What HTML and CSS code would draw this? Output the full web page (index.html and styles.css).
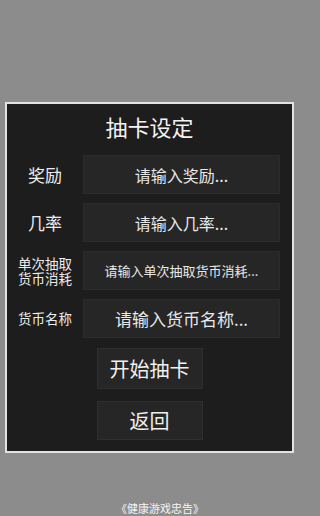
FILE: index.html
```html
<!DOCTYPE html>
<html lang="zh-CN">
<head>
<meta charset="utf-8">
<link rel="stylesheet" href="styles.css">
</head>
<body>
<div class="panel">
  <div class="title">抽卡设定</div>
  <div class="form">
    <div class="label">奖励</div>
    <input class="field" placeholder="请输入奖励...">
    <div class="label">几率</div>
    <input class="field" placeholder="请输入几率...">
    <div class="label small"><span>单次抽取</span><span>货币消耗</span></div>
    <input class="field field-sm" placeholder="请输入单次抽取货币消耗...">
    <div class="label small">货币名称</div>
    <input class="field field-md" placeholder="请输入货币名称...">
  </div>
  <div class="actions">
    <button class="btn btn-start">开始抽卡</button>
    <button class="btn btn-back">返回</button>
  </div>
</div>
<div class="footer">《健康游戏忠告》</div>
</body>
</html>
```
FILE: styles.css
```css
* { box-sizing: border-box; }
html, body {
  margin: 0;
  padding: 0;
  background: #8c8c8c;
  font-family: "Noto Sans CJK SC", "Noto Sans", sans-serif;
  color: #ececec;
}
body { height: 516px; overflow: hidden; }
.panel {
  margin: 102px 0 0 5px;
  width: 289px;
  height: 351px;
  border: 2px solid #e2e2e2;
  background: #1d1d1d;
  padding: 0 12px 0 0;
}
.title {
  height: 44px;
  line-height: 44px;
  margin-bottom: 7px;
  text-align: center;
  font-size: 22px;
  padding-left: 12px;
  color: #f2f2f2;
}
.form {
  display: grid;
  grid-template-columns: 76px 197px;
  grid-auto-rows: 39px;
  row-gap: 9px;
}
.label {
  display: flex;
  flex-direction: column;
  align-items: center;
  justify-content: center;
  font-size: 17px;
  line-height: 1.15;
  text-align: center;
  color: #ececec;
}
.label.small { font-size: 13.5px; line-height: 15px; }
.label.small span { display: block; }
.field {
  height: 39px;
  width: 197px;
  margin: 0;
  padding: 0;
  border: 1px solid #2b2b2b;
  background: #262626;
  text-align: center;
  font-family: inherit;
  font-size: 16px;
  color: #ececec;
  outline: none;
}
.field::placeholder { color: #e8e8e8; opacity: 1; }
.field-sm { font-size: 13px; }
.field-md { font-size: 17px; }
.actions {
  display: flex;
  flex-direction: column;
  align-items: center;
  padding-left: 12px;
  margin-top: 10px;
  gap: 12px;
}
.btn {
  width: 106px;
  margin: 0;
  padding: 0;
  border: 1px solid #2f2f2f;
  background: #262626;
  color: #f0f0f0;
  font-family: inherit;
  font-size: 20px;
}
.btn-start { height: 41px; }
.btn-back { height: 39px; }
.footer {
  margin-top: 48px;
  text-align: center;
  font-size: 11px;
  line-height: 14px;
  color: #f4f4f4;
}
```
